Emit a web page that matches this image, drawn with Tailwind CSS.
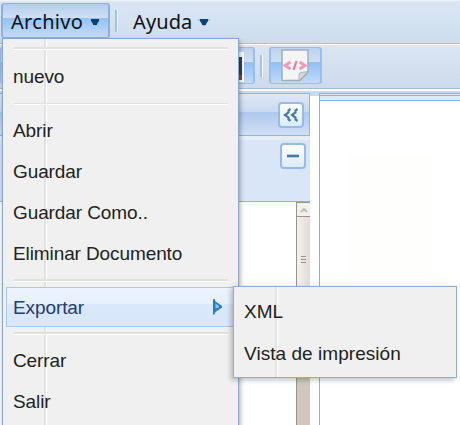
<!DOCTYPE html>
<html lang="es">
<head>
<meta charset="utf-8">
<title>Editor</title>
<script src="https://cdn.jsdelivr.net/npm/@tailwindcss/browser@4"></script>
</head>
<body class="w-[460px] h-[425px] overflow-hidden relative bg-white font-['Liberation_Sans',sans-serif] text-[#222]">
<header class="h-11 border-t border-t-[#eef3f9] border-b border-b-[#a9bfd3] bg-linear-to-b from-[#dae6f5] to-[#cddded] flex items-start pt-[2px] pl-[1px] font-['Noto_Sans',sans-serif] text-[20px] text-[#111]">
  <div class="w-[109px] h-[35px] rounded-[3px] border border-[#8fb0dd] border-x-2 flex items-center pl-[8px] pt-[2px] bg-[linear-gradient(#b5cdeb_0%,#cfe0f5_42%,#95c2f5_43%,#c3dbf7_100%)]">
    <span class="w-[72px] whitespace-nowrap tracking-[0.3px]">Archivo</span>
    <svg class="ml-[6px] mt-[2px]" width="12" height="8"><path d="M0 0h12v2H10L8 5v1L6 8 4 6V5L2 2H0z" fill="#a9c0d8"/><path d="M2 0h8v2L8 5v1H4V5L2 2z" fill="#07427f"/></svg>
  </div>
  <div class="ml-[5px] mt-[7px] w-[3px] h-[22px] bg-[#98c4f9] border-r border-white"></div>
  <div class="ml-[15px] h-[35px] pt-[2px] flex items-center">
    <span class="w-[59px] whitespace-nowrap tracking-[0.1px]">Ayuda</span>
    <svg class="ml-[6px] mt-[2px]" width="12" height="8"><path d="M0 0h12v2H10L8 5v1L6 8 4 6V5L2 2H0z" fill="#a9c0d8"/><path d="M2 0h8v2L8 5v1H4V5L2 2z" fill="#07427f"/></svg>
  </div>
</header>
<div class="h-[45px] border-t border-white border-b border-b-[#a5bcd3] bg-linear-to-b from-[#dbe6f4] to-[#cddaeb] flex items-start pt-[2px]">
  <div class="w-[255px] h-[37px] rounded-[3px] border border-[#9dbce6] border-r-2 flex justify-end items-start bg-[linear-gradient(#bdd2ed_0%,#cfe0f5_40%,#8fc0f6_41%,#c3dbf7_100%)]">
    <svg class="mt-[4px] mr-[9px]" width="8" height="30"><path d="M0 0h8v30H0z" fill="#fff"/><path d="M0 5h6v18H0z" fill="#34415e"/><path d="M0 23h6v5H0z" fill="#8a5121"/></svg>
  </div>
  <div class="ml-[5px] mt-[8px] w-[3px] h-[22px] bg-[#98c4f9] border-r border-white"></div>
  <div class="ml-[6px] w-[53px] h-[37px] rounded-[3px] border border-[#9dbce6] border-x-2 flex justify-center bg-[linear-gradient(#bdd2ed_0%,#cfe0f5_40%,#8fc0f6_41%,#c3dbf7_100%)]">
    <svg class="mt-[1px] mr-[1px]" width="30" height="33" viewBox="0 0 30 33"><path d="M2 1h26v22l-8 8.500H2z" fill="#f5f5f5" stroke="#a3adba" stroke-width="1.500"/><path d="M28 22.500l-9 9v-6q0-2 2-2z" fill="#d8d8d8" stroke="#a0a4aa" stroke-width=".7"/><path d="M10.500 13L5 16.500l5.500 3.500M19.500 13l5.500 3.500-5.500 3.500" fill="none" stroke="#f19abd" stroke-width="3"/><path d="M16.500 12l-3 9" stroke="#ec79a9" stroke-width="2.200"/></svg>
  </div>
</div>
<main class="flex h-[336px] pt-[2px]">
  <section class="w-[310px] shrink-0 pt-[2px] bg-[linear-gradient(#c4dbf8_2px,transparent_2px)]">
    <div class="h-[43px] border-y border-r border-[#92b2e4] flex justify-end items-start pt-[8px] pr-[5px] bg-[linear-gradient(#dde8f6_0%,#c9d9ef_44%,#b0c9ec_45%,#cfdff5_100%)]">
      <div class="w-[26px] h-[26px] rounded-[4px] border-2 border-[#96bae9] bg-linear-to-b from-white to-[#dcecfb] flex items-center justify-center">
        <svg width="16" height="14" viewBox="0 0 16 14"><path d="M7.500 1L5.500 2.500v2L2 7l3.500 2.500v2l2 1.500M14.500 1l-2 1.500v2L9 7l3.500 2.500v2l2 1.500" fill="none" stroke="#467cac" stroke-width="2.200"/></svg>
      </div>
    </div>
    <div class="h-[66px] bg-[#d9e6f8] border-t-4 border-t-[#e6edf5] border-b border-b-[#92b2e0] flex justify-end items-start pt-[3px] pr-[4px]">
      <div class="w-[26px] h-[26px] rounded-[4px] border-2 border-[#96bae9] bg-linear-to-b from-white to-[#dcecfb] flex items-center justify-center"><div class="w-3 h-[4px] bg-[#4679a8] border-y border-[#b7cde4]"></div></div>
    </div>
    <div class="flex justify-end h-[223px]">
      <div class="w-[14px] border-l border-[#9c948c] bg-[#d0c7bf]">
        <div class="h-[15px] border-y border-[#9c948c] bg-[#f3f0ed] flex items-center justify-center"><svg width="8" height="6"><path d="M1 5l3-3 3 3" fill="none" stroke="#c0b8ad" stroke-width="1.800"/></svg></div>
        <div class="h-[120px] bg-linear-to-r from-[#f3f0ed] to-[#e2dcd7] pt-[39px] pl-[4px]"><div class="w-[5px] h-[7px] bg-[repeating-linear-gradient(#9c948c_0px,#9c948c_1px,transparent_1px,transparent_3px)]"></div></div>
      </div>
    </div>
  </section>
  <div class="w-[9px] h-[5px] bg-[#c4dbf8]"></div>
  <section class="grow">
    <div class="h-[2px] bg-[#c4dbf8]"></div>
    <div class="h-[332px] border-t border-l border-[#8db0e2]">
      <div class="h-[7px] bg-[#dce9fa] border-b border-[#8db0e2] pt-px"><div class="h-px bg-[#8db0e2]"></div></div>
      <div class="mt-[54px] ml-[29px] w-[82px] h-[220px] bg-[#fefefd]"></div>
    </div>
  </section>
</main>

<nav class="absolute left-[2px] top-[38px] w-[237px] h-[400px] border border-[#8aa5cf] bg-[linear-gradient(90deg,transparent_41px,#e2e2e2_41px,#e2e2e2_43px,#fff_43px,#fff_44px,transparent_44px)] bg-[#f0f0f0] shadow-[1px_3px_5px_rgba(0,0,0,0.35)] text-[19px] tracking-[-0.1px] pl-[3px] pt-[8px]">
  <div class="ml-[7px] w-[215px] h-[3px] bg-[#e0e0e0] border-b border-white"></div>
  <div class="h-[41px] mt-[7px] mb-[5px] pl-[7px] flex items-center">nuevo</div>
  <div class="ml-[7px] w-[215px] h-[2px] bg-[#e0e0e0] border-b border-white"></div>
  <div class="h-[41px] mt-[6px] pl-[7px] flex items-center">Abrir</div>
  <div class="h-[41px] pl-[7px] flex items-center">Guardar</div>
  <div class="h-[41px] pl-[7px] flex items-center">Guardar Como..</div>
  <div class="h-[41px] pl-[7px] flex items-center whitespace-nowrap">Eliminar Documento</div>
  <div class="mt-[4px] ml-[7px] w-[215px] h-[3px] bg-[#e0e0e0] border-b border-white"></div>
  <div class="mt-[5px] h-[40px] border border-[#a8c8f2] pl-[6px] pr-[14px] pt-[2px] flex items-center justify-between text-[#233d6d] bg-[linear-gradient(#ebf3fd_0px,#e7f1fd_16px,#d9e8fb_16px,#d9e7fa_100%)]">Exportar
    <svg class="-mt-[2px]" width="10" height="16"><path d="M0 0h1.500l1 2.500L9 7v1.500L2.500 13l-1 2.500H0z" fill="#2d7ac6"/><path d="M2.500 4.500L6 7v1.500l-3.500 1z" fill="#8cc4f1"/></svg>
  </div>
  <div class="mt-[5px] ml-[7px] w-[215px] h-[3px] bg-[#e0e0e0] border-b border-white"></div>
  <div class="h-[41px] mt-[6px] pl-[7px] flex items-center">Cerrar</div>
  <div class="h-[41px] pl-[7px] flex items-center">Salir</div>
</nav>
<nav class="absolute left-[233px] top-[286px] w-[224px] h-[92px] border border-[#94abcb] bg-[linear-gradient(90deg,transparent_41px,#e2e2e2_41px,#e2e2e2_43px,#fff_43px,#fff_44px,transparent_44px)] bg-[#f0f0f0] shadow-[-2px_2px_5px_rgba(0,0,0,0.25)] text-[19px] pl-[10px] pt-[4px]">
  <div class="h-[42px] flex items-center">XML</div>
  <div class="h-[42px] flex items-center whitespace-nowrap tracking-[0.05px]">Vista de impresión</div>
</nav>
</body>
</html>
